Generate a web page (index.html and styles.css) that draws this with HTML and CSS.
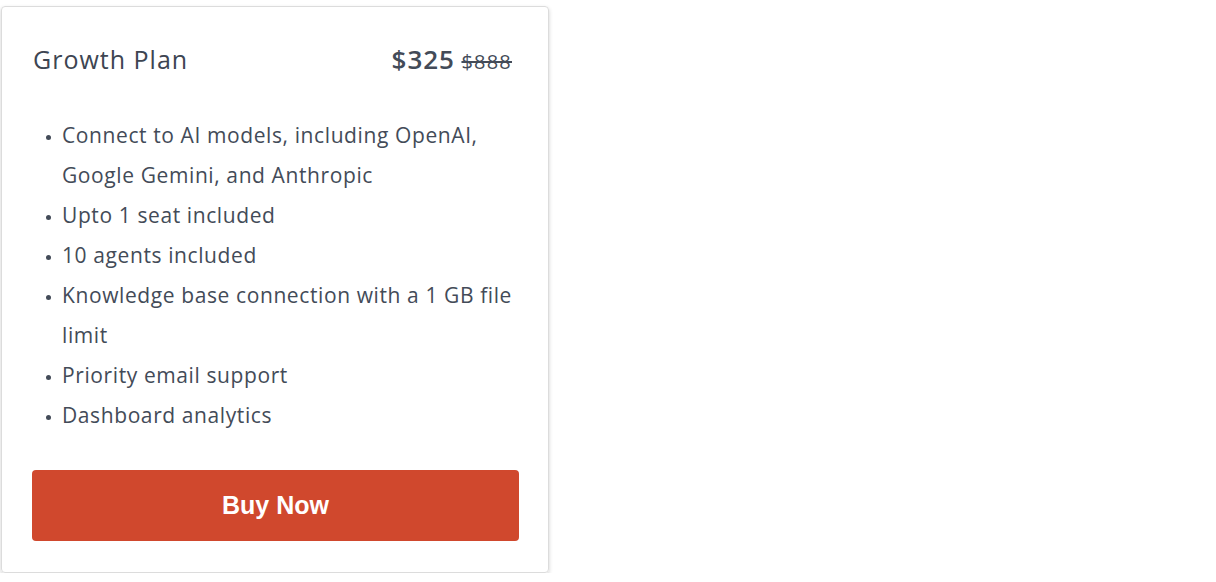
FILE: index.html
```html
<!DOCTYPE html>
<html>
<head>
<meta charset="utf-8">
<link rel="stylesheet" href="styles.css">
</head>
<body>
<div class="card">
  <div class="head">
    <h2 class="title">Growth Plan</h2>
    <div class="price"><span class="now">$325</span> <s class="old">$888</s></div>
  </div>
  <ul class="features">
    <li>Connect to AI models, including OpenAI, Google Gemini, and Anthropic</li>
    <li>Upto 1 seat included</li>
    <li>10 agents included</li>
    <li>Knowledge base connection with a 1 GB file limit</li>
    <li>Priority email support</li>
    <li>Dashboard analytics</li>
  </ul>
  <button class="buy">Buy Now</button>
</div>
</body>
</html>
```
FILE: styles.css
```css
html, body { margin: 0; padding: 0; background: #fff; }
body { font-family: "Open Sans", sans-serif; color: #434b58; }
.card {
  box-sizing: border-box;
  width: 548px;
  height: 567px;
  margin: 6px 0 0 1px;
  padding: 37px 29px 0 30px;
  border: 1px solid #dcdcdc;
  border-radius: 4px;
  box-shadow: 0 2px 4px rgba(0,0,0,0.18);
  display: flex;
  flex-direction: column;
}
.head {
  display: flex;
  justify-content: space-between;
  align-items: baseline;
  padding-left: 1px;
}
.title { margin: 0; font-size: 25px; font-weight: 400; line-height: 30px; letter-spacing: 1px; color: #3d4552; }
.price { font-size: 26px; line-height: 30px; padding-right: 7px; white-space: nowrap; }
.now { font-weight: 600; letter-spacing: 0.9px; }
.old { font-size: 20px; letter-spacing: 1.2px; font-weight: 400; }
.features {
  list-style: none;
  margin: 38px 0 0 0;
  padding: 0 0 0 30px;
  font-size: 21px;
  line-height: 40px;
  letter-spacing: 0.6px;
}
.features li { position: relative; }
.features li::before {
  content: "";
  position: absolute;
  left: -16px;
  top: 20px;
  width: 5px;
  height: 5px;
  border-radius: 50%;
  background: #434b58;
}
.buy {
  margin-top: 35px;
  height: 71px;
  width: 487px;
  border: none;
  border-radius: 4px;
  background: #d0482d;
  color: #fff;
  font-family: "Liberation Sans", Arial, sans-serif;
  font-weight: 700;
  font-size: 25px;
}
```
